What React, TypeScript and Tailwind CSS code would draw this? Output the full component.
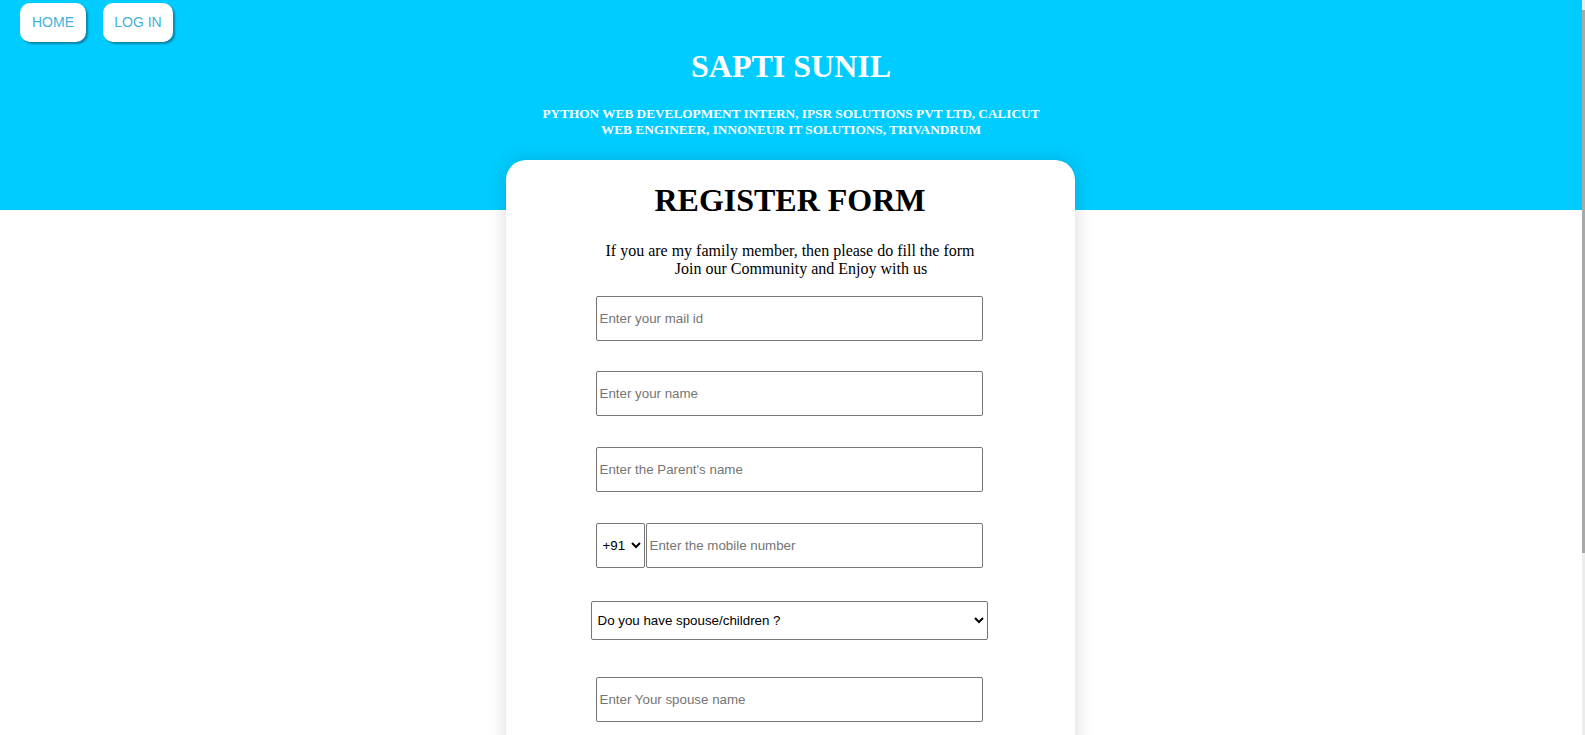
import React from "react"

const serif = "font-['Liberation_Serif','Times_New_Roman',serif]"
const sans = "font-['Liberation_Sans',Arial,sans-serif]"

const inputClass =
  "h-[45px] w-[387px] rounded-[2px] border border-[#767676] bg-white px-[3px] text-[13.33px] text-black placeholder:text-[#757575] outline-none"

function NavButton({ label, width }: { label: string; width: string }) {
  return (
    <button
      className={`${sans} ${width} h-[39px] rounded-[10px] bg-white text-[14px] text-[#3fb2d8] shadow-[2px_2px_2px_#0b86a8]`}
    >
      {label}
    </button>
  )
}

export default function App() {
  return (
    <div className="flex h-screen bg-white">
      <div className="flex-1 overflow-y-auto [scrollbar-width:none] [&::-webkit-scrollbar]:hidden">
        <header className="flex h-[210px] flex-col bg-[#00ccff]">
          <nav className="flex gap-[17px] pl-[20px] pt-[3px]">
            <NavButton label="HOME" width="w-[66px]" />
            <NavButton label="LOG IN" width="w-[70px]" />
          </nav>
          <h1
            className={`${serif} mt-[6px] text-center text-[32px] font-bold leading-[37px] text-white`}
          >
            SAPTI SUNIL
          </h1>
          <h5
            className={`${serif} mt-[21px] text-center text-[13.28px] font-bold leading-[16px] text-white`}
          >
            PYTHON WEB DEVELOPMENT INTERN, IPSR SOLUTIONS PVT LTD, CALICUT
            <br />
            WEB ENGINEER, INNONEUR IT SOLUTIONS, TRIVANDRUM
          </h5>
        </header>

        <main className="pb-[40px]">
          <div className="relative mx-auto -mt-[50px] flex w-[569px] -translate-x-[1px] flex-col items-center rounded-[20px] bg-white pb-[50px] pt-[22px] shadow-[0_0_20px_rgba(0,0,0,0.15)]">
            <h2
              className={`${serif} text-[32px] font-bold leading-[37px] text-black`}
            >
              REGISTER FORM
            </h2>
            <p
              className={`${serif} mt-[23px] text-center text-[16px] leading-[18px] text-black`}
            >
              If you are my family member, then please do fill the form
              <span className="block pl-[22px]">
                Join our Community and Enjoy with us
              </span>
            </p>

            <form
              className={`${sans} mt-[18px] flex flex-col items-center pr-[2px]`}
            >
              <input className={inputClass} placeholder="Enter your mail id" />
              <input
                className={`${inputClass} mt-[30px]`}
                placeholder="Enter your name"
              />
              <input
                className={`${inputClass} mt-[31px]`}
                placeholder="Enter the Parent's name"
              />
              <div className="mt-[31px] flex w-[387px]">
                <select className="h-[45px] w-[49px] rounded-[2px] border border-[#767676] bg-white pl-[2px] text-[13.33px] text-black">
                  <option>+91</option>
                  <option>+1</option>
                  <option>+44</option>
                </select>
                <input
                  className="ml-[1px] h-[45px] flex-1 rounded-[2px] border border-[#767676] bg-white px-[3px] text-[13.33px] text-black placeholder:text-[#757575] outline-none"
                  placeholder="Enter the mobile number"
                />
              </div>
              <select className="mt-[33px] h-[39px] w-[397px] rounded-[2px] border border-[#767676] bg-white pl-[2px] text-[13.33px] text-black">
                <option>Do you have spouse/children ?</option>
                <option>Yes</option>
                <option>No</option>
              </select>
              <input
                className={`${inputClass} mt-[37px]`}
                placeholder="Enter Your spouse name"
              />
              <input
                className={`${inputClass} mt-[30px]`}
                placeholder="Enter your children's name"
              />
              <button
                type="button"
                className="mt-[30px] h-[36px] w-[110px] rounded-[8px] bg-[#00ccff] text-[14px] text-white"
              >
                REGISTER
              </button>
            </form>
          </div>
        </main>
      </div>

      {/* thin page scrollbar */}
      <div className="flex w-[3px] flex-col bg-[#ececec]">
        <div className="mt-[10px] h-[543px] bg-[#a9a9a9]" />
      </div>
    </div>
  )
}
